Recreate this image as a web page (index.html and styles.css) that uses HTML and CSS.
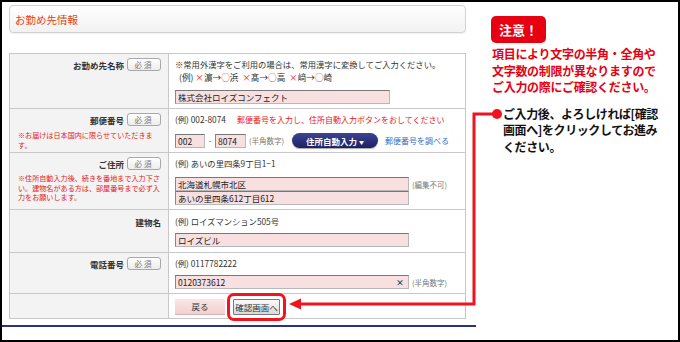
FILE: index.html
```html
<!DOCTYPE html>
<html lang="ja">
<head>
    <meta charset="UTF-8">
    <title>お勤め先情報</title>
    <link rel="stylesheet" href="styles.css">
</head>
<body>
    <div class="frame">
        <div class="form-col">
            <div class="title-box"><h2>お勤め先情報</h2></div>

            <table class="form">
                <tr class="r1">
                    <th><div class="lbl">お勤め先名称<span class="req">必須</span></div></th>
                    <td>
                        <p class="line">※常用外漢字をご利用の場合は、常用漢字に変換してご入力ください。</p>
                        <p class="ex">(例) <span class="ng">×</span>濵→<span class="ng">○</span>浜&nbsp; <span class="ng">×</span>髙→<span class="ng">○</span>高&nbsp; <span class="ng">×</span>﨑→<span class="ng">○</span>崎</p>
                        <input class="txt w-name" value="株式会社ロイズコンフェクト" readonly>
                    </td>
                </tr>
                <tr class="r2">
                    <th>
                        <div class="lbl">郵便番号<span class="req">必須</span></div>
                        <p class="warn">※お届けは日本国内に限らせていただきま<br>す。</p>
                    </th>
                    <td>
                        <p class="line">(例) 002-8074<span class="red-note">郵便番号を入力し、住所自動入力ボタンをおしてください</span></p>
                        <div class="zip-row">
                            <input class="txt w-zip1" value="002" readonly>
                            <span class="dash">-</span>
                            <input class="txt w-zip2" value="8074" readonly>
                            <span class="hint">(半角数字)</span>
                            <button class="auto-btn">住所自動入力 <span class="caret">▼</span></button>
                            <a class="zip-link" href="#">郵便番号を調べる</a>
                        </div>
                    </td>
                </tr>
                <tr class="r3">
                    <th>
                        <div class="lbl">ご住所<span class="req">必須</span></div>
                        <p class="warn">※住所自動入力後、続きを番地まで入力下さ<br>い。建物名がある方は、部屋番号まで必ず入<br>力をお願いします。</p>
                    </th>
                    <td>
                        <p class="line">(例) あいの里四条9丁目1−1</p>
                        <div class="addr-row">
                            <input class="txt w-addr" value="北海道札幌市北区" readonly>
                            <span class="hint">(編集不可)</span>
                        </div>
                        <input class="txt w-addr" value="あいの里四条612丁目612" readonly>
                    </td>
                </tr>
                <tr class="r4">
                    <th><div class="lbl">建物名</div></th>
                    <td>
                        <p class="line">(例) ロイズマンション505号</p>
                        <input class="txt w-addr" value="ロイズビル" readonly>
                    </td>
                </tr>
                <tr class="r5">
                    <th><div class="lbl">電話番号<span class="req">必須</span></div></th>
                    <td>
                        <p class="line">(例) 0117782222</p>
                        <div class="addr-row">
                            <div class="txt w-addr tel-box">
                                <input class="bare" value="0120373612" readonly>
                                <span class="clear">×</span>
                            </div>
                            <span class="hint">(半角数字)</span>
                        </div>
                    </td>
                </tr>
                <tr class="r6">
                    <th></th>
                    <td>
                        <div class="btn-row">
                            <button class="back-btn">戻る</button>
                            <button class="confirm-btn">確認画面へ</button>
                        </div>
                    </td>
                </tr>
            </table>
            <div class="bottom-line"></div>
        </div>

        <div class="note-col">
            <div class="caution">注意！</div>
            <p class="caution-text">項目により文字の半角・全角や<br>文字数の制限が異なりますので<br>ご入力の際にご確認ください。</p>
            <p class="guide">ご入力後、よろしければ[確認<br>画面へ]をクリックしてお進み<br>ください。</p>
        </div>

        <svg class="callout" width="680" height="342" viewBox="0 0 680 342">
            <path d="M497 114 H474 V304 H299" fill="none" stroke="#f0141e" stroke-width="3"/>
            <polygon points="289,304 301,298.5 301,309.5" fill="#f0141e"/>
            <circle cx="497" cy="114" r="5" fill="#f0141e"/>
        </svg>
    </div>
</body>
</html>
```

FILE: styles.css
```css
* { box-sizing: border-box; }
body { margin: 0; background: #fff; color: #333; font-family: "Noto Sans CJK JP", sans-serif; }
p { margin: 0; }

.frame { position: relative; width: 680px; height: 342px; border: 2px solid #000; display: flex; overflow: hidden; }

/* left: form */
.form-col { width: 474px; flex: none; }
.title-box {
    margin: 3px 10px 0 7px;
    height: 28px;
    padding-left: 5px;
    display: flex;
    align-items: center;
    border: 1px solid #d2d2d2;
    border-radius: 4px;
    background: linear-gradient(#fff, #f2f2f2);
    box-shadow: 0 1px 1px rgba(0, 0, 0, 0.06);
}
.title-box h2 { margin: 0; font-size: 10.5px; font-weight: normal; color: #e8400e; }

.form { margin: 20px 10px 0 7px; width: 457px; border-collapse: collapse; border: 1px solid #c8c8c8; }
.form th, .form td { border: 1px solid #c8c8c8; vertical-align: top; padding: 4px 0 0 6px; }
.form th { width: 159px; padding: 4px 7px 0 8px; background: #f3f3f3; text-align: right; font-weight: normal; }
.r1 { height: 55px; }
.r2 { height: 44px; }
.r3 { height: 57px; }
.r4 { height: 43px; }
.r5 { height: 41px; }
.r6 { height: 25px; }
.r4 th, .r4 td { padding-top: 5px; }

.lbl { height: 13px; display: flex; justify-content: flex-end; align-items: center; gap: 3px; font-size: 8.5px; font-weight: bold; color: #333; }
.req {
    width: 34px;
    height: 13px;
    display: inline-flex;
    align-items: center;
    justify-content: center;
    border: 1px solid #a8a8a8;
    border-radius: 3px;
    background: linear-gradient(#fff, #ececec);
    font-size: 7.5px;
    font-weight: normal;
    letter-spacing: 2px;
    color: #777;
}
.warn { margin-top: 4px; text-align: left; font-size: 7.1px; line-height: 9.6px; color: #e8201a; }
.r2 .warn { margin-top: 5px; }

.line { height: 12px; line-height: 12px; font-size: 8.3px; color: #333; white-space: nowrap; }
.ex { margin: 1px 0 0 4px; height: 12px; line-height: 12px; font-size: 8.6px; color: #333; }
.ng { color: #e8201a; }
.red-note { margin-left: 11px; font-size: 8px; color: #e8201a; }

.txt {
    display: block;
    height: 14px;
    padding: 0 2px;
    border: 1px solid #b8b8b8;
    border-top-color: #777;
    border-left-color: #888;
    background: #f8dfe0;
    font: 8.5px "Noto Sans CJK JP", sans-serif;
    color: #222;
    outline: none;
}
.r1 .txt { margin-top: 7px; }
.w-name { width: 215px; }
.w-addr { width: 234px; }
.w-zip1 { width: 30px; }
.w-zip2 { width: 31px; }

.zip-row { margin-top: 8px; display: flex; align-items: center; }
.dash { width: 10px; text-align: center; font-size: 8px; color: #555; }
.hint { margin-left: 3px; font-size: 7.5px; color: #777; white-space: nowrap; }
.auto-btn {
    margin-left: 8px;
    width: 86px;
    height: 15px;
    padding: 0;
    border: none;
    border-radius: 8px;
    background: linear-gradient(#3d4594, #1b2160);
    box-shadow: 0 1px 1px rgba(0, 0, 0, 0.35);
    color: #fff;
    font: bold 8.5px "Noto Sans CJK JP", sans-serif;
}
.caret { font-size: 5px; vertical-align: 1px; }
.zip-link { margin-left: 7px; font-size: 8px; color: #2f6fc6; text-decoration: none; white-space: nowrap; }

.addr-row { display: flex; align-items: center; }
.r3 .addr-row { margin-top: 8px; }
.r4 .txt { margin-top: 6px; }
.r5 .addr-row { margin-top: 6px; }

.tel-box { display: flex; align-items: center; justify-content: space-between; padding-right: 4px; }
.bare { width: 120px; padding: 0; border: none; background: transparent; font: 8.5px "Noto Sans CJK JP", sans-serif; color: #222; outline: none; }
.clear { font-size: 8px; font-weight: bold; color: #333; }

.btn-row { display: flex; gap: 8px; align-items: center; }
.back-btn {
    width: 50px;
    height: 16px;
    padding: 0;
    border: none;
    border-bottom: 1px solid #d7b3b4;
    background: linear-gradient(#fbe5e5, #f2d0d1);
    font: 8.5px "Noto Sans CJK JP", sans-serif;
    color: #333;
}
.confirm-btn {
    margin-top: 1px;
    width: 47px;
    height: 16px;
    padding: 0;
    border: 1px solid #7a7a7a;
    border-radius: 1px;
    background: linear-gradient(#fafafa, #dadada);
    font: 8.5px "Noto Sans CJK JP", sans-serif;
    color: #333;
    outline: 3px solid #f0141e;
    outline-offset: 3px;
}

.bottom-line { margin-top: 6px; height: 2px; background: #2a3181; }

/* right: notes */
.note-col { flex: 1; padding: 14px 0 0 15px; }
.caution {
    width: 55px;
    height: 27px;
    line-height: 27px;
    border-radius: 5px;
    background: #e60012;
    color: #fff;
    text-align: center;
    font-size: 13px;
    font-weight: bold;
}
.caution-text { margin: 3px 0 0 1px; font-size: 12px; font-weight: bold; line-height: 16.5px; letter-spacing: -0.3px; color: #e60012; }
.guide { margin: 10px 0 0 12px; font-size: 12px; font-weight: bold; line-height: 16.5px; letter-spacing: -0.4px; color: #111; }

.callout { position: absolute; top: -2px; left: -2px; pointer-events: none; }
```
